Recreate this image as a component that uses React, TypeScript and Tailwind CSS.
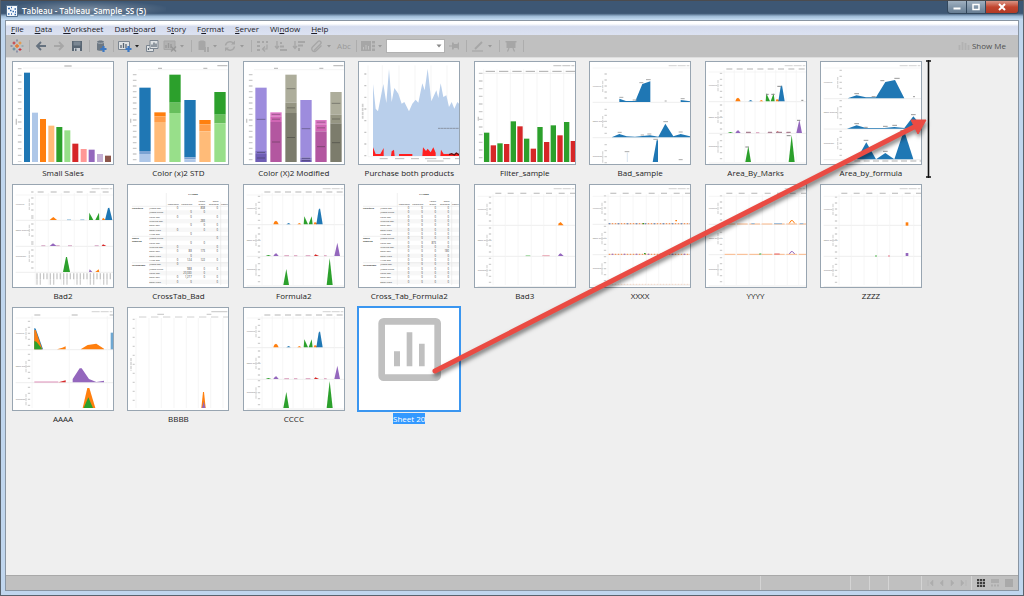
import { useState } from 'react';
import type { ReactNode } from 'react';

const BLUE = '#1f77b4';
const ORANGE = '#ff7f0e';
const GREEN = '#2ca02c';
const RED = '#d62728';
const PURPLE = '#9467bd';

// [x, width, top, bottom, color]
type Bar = [number, number, number, number, string];

const smallSales: Bar[] = [
  [33, 18, 32, 300, BLUE],
  [57, 18, 152, 300, '#aec7e8'],
  [81, 18, 171, 300, ORANGE],
  [106, 18, 191, 300, '#ffbb78'],
  [130, 18, 195, 300, GREEN],
  [154, 18, 205, 300, '#98df8a'],
  [178, 18, 245, 300, RED],
  [203, 18, 261, 300, '#ff9896'],
  [227, 18, 263, 300, PURPLE],
  [252, 18, 276, 300, '#c5b0d5'],
  [276, 18, 281, 300, '#8c564b'],
];

const stackTops = [
  [34, 77, 267, 276],
  [79, 151, 163, 180],
  [124, 38, 122, 153],
  [169, 114, 286, 292],
  [214, 174, 187, 208],
  [259, 90, 158, 184],
];

const stdColors = [
  [BLUE, '#7ba3d3', '#aec7e8'],
  [ORANGE, '#ff9e4a', '#ffbb78'],
  [GREEN, '#67bf5c', '#98df8a'],
];

const modifiedColors = [
  ['#9d8cdd', '#8172c4', '#6f5eb5'],
  ['#de78c6', '#d066b4', '#b357a0'],
  ['#adad9b', '#969683', '#7c7c6c'],
];

const filterBars: Bar[] = [212, 250, 244, 246, 178, 193, 230, 260, 195, 240, 190, 220, 180, 237].map(
  (top, i) => [27 + i * 20, 16, top, 300, i % 2 ? RED : GREEN] as Bar
);

const boxRows = ['Jumbo Box', 'Jumbo Drum', 'Large Box', 'Medium Box', 'Small Box', 'Small Pack', 'Wrap Bag'];
const crossRows = [
  ...boxRows,
  'Jumbo Drum',
  'Large Box',
  'Medium Box',
  'Small Box',
  'Small Pack',
  'Wrap Bag',
  'Jumbo Box',
  'Jumbo Drum',
  'Large Box',
  'Small Box',
  'Small Pack',
];

const badValues = [
  ['0', '', '808', '0'],
  ['', '0', '0', ''],
  ['0', '0', '', '0'],
  ['', '', '283', ''],
  ['', '0', '0', '0'],
  ['0', '', '0', '0'],
  ['', '0', '', ''],
  ['', '', '', '0'],
  ['', '0', '0', ''],
  ['0', '', '', '0'],
  ['0', '88', '173', '0'],
  ['', '0', '', ''],
  ['0', '124', '122', '0'],
  ['0', '', '', ''],
  ['', '988', '0', '0'],
  ['', '20,330', '0', ''],
  ['0', '1,277', '0', '0'],
  ['0', '0', '', '0'],
];

const formulaValues = crossRows.map((_, i) => ['0', '0', i === 8 ? '873' : '0', i === 10 ? '180' : '0']);

function Bars({ bars }: { bars: Bar[] }) {
  return (
    <>
      {bars.map(([x, w, top, bottom, fill], i) => (
        <rect key={i} x={x} y={top} width={w} height={bottom - top} fill={fill} />
      ))}
    </>
  );
}

// Faint tick labels down the left axis
function Ticks({ x = 20, from = 20, to = 300, step = 17 }: { x?: number; from?: number; to?: number; step?: number }) {
  return <path d={`M${x} ${from}V${to}`} stroke="#cccccc" strokeWidth={11} strokeDasharray={`4 ${step - 4}`} />;
}

function Area({ points, fill = BLUE }: { points: string; fill?: string }) {
  return <polygon points={points} fill={fill} />;
}

function Panes({ rows, left, cols, header = 24 }: { rows: number[]; left: number; cols: number[]; header?: number }) {
  const names = ['Furniture', 'Office Supplies', 'Technology'];
  return (
    <g>
      <path d={`M236 11H298`} stroke="#dadada" strokeWidth={4} strokeDasharray="24 3" />
      {rows.map((y, i) => (
        <g key={y}>
          <text x={8} y={y - 46} fontSize={6} fill="#777">
            {names[i]}
          </text>
          <path d={`M${left - 9} ${y - 86}V${y - 4}`} stroke="#d0d0d0" strokeWidth={7} strokeDasharray="4 14" />
          <path d={`M${left - 18} ${y - 64}V${y - 28}`} stroke="#dadada" strokeWidth={4} strokeDasharray="10 2" />
          <path d={`M8 ${y + 1}H300`} stroke="#e6e6e6" strokeWidth={2} />
        </g>
      ))}
      <path d={`M8 ${header + 6}H300`} stroke="#f0f0f0" strokeWidth={2} />
      {cols.map((x) => (
        <g key={x}>
          <path d={`M${x} ${header}V300`} stroke="#f2f2f2" strokeWidth={2} />
          <path d={`M${x + 7} ${header - 3}h18`} stroke="#c8c8c8" strokeWidth={4} />
        </g>
      ))}
    </g>
  );
}

const narrowCols = [54, 85, 116, 147, 178, 209, 240, 271];
const wideCols = [54, 91, 129, 169, 206, 244, 278];

function StackedBars({ colors, labels }: { colors: string[][]; labels?: boolean }) {
  return (
    <>
      <Ticks x={20} from={36} />
      <path d="M30 23H300" stroke="#eee" strokeWidth={2} />
      <path d="M90 19h12M226 19h12M268 11h30" stroke="#c0c0c0" strokeWidth={4} />
      <path d="M8 170v12" stroke="#c8c8c8" strokeWidth={4} />
      {stackTops.map(([x, a, b, c], i) => (
        <g key={x}>
          <Bars
            bars={[
              [x, 34, a, b, colors[i % 3][0]],
              [x, 34, b, c, colors[i % 3][1]],
              [x, 34, c, 300, colors[i % 3][2]],
            ]}
          />
          {labels && (
            <path
              d={`M${x + 4} ${(a + b) / 2}h26M${x + 5} ${(b + c) / 2}h24M${x + 5} ${(c + 300) / 2}h24`}
              stroke="#222"
              strokeOpacity={0.35}
              strokeWidth={3}
            />
          )}
        </g>
      ))}
    </>
  );
}

function FormulaChart() {
  return (
    <>
      <Panes rows={[118, 213, 302]} left={54} cols={narrowCols} />
      <Area fill={ORANGE} points="88,118 91,110 96,107 100,110 104,118" />
      <Area points="127,118 134,114 140,118" />
      <Area fill={ORANGE} points="160,118 166,114 172,118" />
      <Area fill={GREEN} points="179,118 181,94 192,118" />
      <Area fill={GREEN} points="194,118 203,94 206,118" />
      <Area fill={ORANGE} points="209,118 212,111 219,114 219,118" />
      <Area points="217,118 224,74 228,70 236,118" />
      <Area fill={GREEN} points="65,213 73,210 82,213" />
      <Area fill={PURPLE} points="88,213 93,206 97,205 104,213" />
      <path d="M121 212h14M150 212h10M185 212h14M240 212h8" stroke="#dba0bd" strokeWidth={3} />
      <Area fill={RED} points="210,213 214,208 225,213" />
      <Area fill={PURPLE} points="271,213 280,173 288,213" />
      <Area fill={GREEN} points="118,300 127,252 135,300" />
      <Area fill={GREEN} points="248,300 257,219 266,300" />
    </>
  );
}

function CrossTab({ values }: { values: string[][] }) {
  const xs = [151, 191, 231, 270];
  return (
    <g fontSize={7} fill="#333">
      {crossRows.map((_, i) => i % 2 === 1 && <rect key={i} x={64} y={63 + i * 13} width={236} height={13} fill="#f7f7f7" />)}
      <path d="M115 24V300M278 50V300M12 64H300M12 154H300M12 233H300" stroke="#e8e8e8" strokeWidth={2} fill="none" />
      <text x={195} y={31} textAnchor="middle" fontWeight={700}>
        1/1/2009
      </text>
      <text x={153} y={60} textAnchor="end">Consumer</text>
      <text x={193} y={60} textAnchor="end">Corporate</text>
      <text x={231} y={52} textAnchor="end">Home</text>
      <text x={231} y={60} textAnchor="end">Office</text>
      <text x={272} y={52} textAnchor="end">Small</text>
      <text x={272} y={60} textAnchor="end">Business</text>
      <text x={279} y={60}>Consu</text>
      <g fontWeight={700}>
        <text x={12} y={72}>Furniture</text>
        <text x={12} y={163}>Office</text>
        <text x={12} y={172}>Supplies</text>
        <text x={12} y={242}>Technology</text>
      </g>
      {crossRows.map((name, i) => (
        <g key={i}>
          <text x={64} y={72 + i * 13}>
            {name}
          </text>
          {values[i].map((v, c) => (
            <text key={c} x={xs[c]} y={72 + i * 13} textAnchor="end" fontSize={8}>
              {v}
            </text>
          ))}
        </g>
      ))}
    </g>
  );
}

const sheets: { name: string; chart: ReactNode }[] = [
  {
    name: 'Small Sales',
    chart: (
      <>
        <Ticks from={18} step={20} />
        <path d="M30 18H296" stroke="#eee" strokeWidth={2} />
        <path d="M154 12h22M10 170v18" stroke="#c4c4c4" strokeWidth={4} />
        <Bars bars={smallSales} />
      </>
    ),
  },
  { name: 'Color (x)2 STD', chart: <StackedBars colors={stdColors} /> },
  { name: 'Color (X)2 Modified', chart: <StackedBars colors={modifiedColors} labels /> },
  {
    name: 'Purchase both products',
    chart: (
      <>
        <path d="M27 10V284H300M70 10V284M120 10V284M168 10V284M216 10V284M264 10V284" stroke="#f0f0f0" strokeWidth={2} fill="none" />
        <path d="M19 34V284" stroke="#c4c4c4" strokeWidth={6} strokeDasharray="4 31" />
        <path d="M11 125V170" stroke="#d0d0d0" strokeWidth={5} strokeDasharray="10 2" />
        <Area
          fill="#b9cfeb"
          points="42,66 50,140 57,148 73,66 82,123 90,21 98,120 106,78 118,95 128,125 136,120 150,148 160,125 170,113 178,122 190,64 197,85 206,20 217,118 232,85 238,108 245,64 253,105 262,100 270,135 278,120 286,140 295,120 300,125 300,282 42,282"
        />
        <g fill="#ff2020">
          <polygon points="42,282 42,256 50,276 64,276 74,258 74,282" />
          <polygon points="96,282 98,268 105,263 107,282" />
          <rect x={120} y={276} width={40} height={6} />
          <polygon points="190,282 192,256 201,267 206,260 215,271 223,256 230,272 230,282" />
          <polygon points="244,282 246,263 254,276 300,275 300,282" />
        </g>
        <path d="M270 278l8-3 8 4 6-6 8 5" stroke="#601010" strokeWidth={4} fill="none" />
        <path d="M237 199h62" stroke="#8b95a4" strokeWidth={3} strokeDasharray="8 1" />
        <path d="M62 290h24M108 290h28M156 290h24M198 290h34M252 290h22M288 290h12M204 297h50" stroke="#bcbcbc" strokeWidth={3} />
      </>
    ),
  },
  {
    name: 'FIlter_sample',
    chart: (
      <>
        <path d="M26 22V300M66 22V300M106 22V300M146 22V300M186 22V300M226 22V300M266 22V300" stroke="#f0f0f0" strokeWidth={2} />
        <path d="M22 34H300" stroke="#e8e8e8" strokeWidth={2} />
        <path d="M32 28H300" stroke="#aaa" strokeWidth={3} strokeDasharray="28 12" />
        <path d="M235 11H298" stroke="#ccc" strokeWidth={4} strokeDasharray="24 3" />
        <path d="M10 164v12" stroke="#c8c8c8" strokeWidth={4} />
        <Ticks x={17} from={32} step={23} />
        <Bars bars={filterBars} />
      </>
    ),
  },
  {
    name: 'Bad_sample',
    chart: (
      <>
        <Panes rows={[120, 226, 332]} left={56} cols={[]} header={12} />
        <Area points="88,120 88,110 108,117 136,117 157,66 181,58 181,120" />
        <Area points="272,120 272,114 300,118 300,120" />
        <Area points="65,226 88,216 110,223 135,224 180,220 205,224 226,185 250,223 272,216 300,223 300,226" />
        <Area points="188,300 200,235 204,235 204,300" />
        <path d="M112 272V300" stroke="#c5d8e8" strokeWidth={2} />
        <path
          d="M148 62h12M168 53h14M88 106h12M128 114h12M224 117h6M272 110h12M83 211h12M220 179h14M172 216h12M152 219h10M266 210h12M190 232h14M104 269h14M266 293h12"
          stroke="#aaa"
          strokeWidth={3}
        />
      </>
    ),
  },
  {
    name: 'Area_By_Marks',
    chart: (
      <>
        <FormulaChart />
        <path d="M214 73h12M180 97h8M196 97h10M273 175h10M118 255h10M242 221h12M286 115h6" stroke="#888" strokeWidth={3} />
        <path d="M120 211h14M186 211h12M210 211h18M242 211h12" stroke="#a98292" strokeWidth={4} />
      </>
    ),
  },
  {
    name: 'Area_by_formula',
    chart: (
      <>
        <Panes rows={[109, 200, 292]} left={68} cols={[]} header={12} />
        <Area points="80,109 107,100 135,106 165,106 193,60 222,54 250,109" />
        <Area points="78,200 107,190 135,198 190,198 220,195 250,198 277,163 300,190 300,200" />
        <Area points="107,292 136,241 165,292" />
        <Area points="165,292 193,273 220,292" />
        <Area points="220,292 249,205 277,292" />
        <path
          d="M178 56h12M220 49h16M100 95h14M152 104h12M276 104h6M100 185h14M130 196h10M186 193h14M214 190h14M270 158h14M128 235h14M186 268h14M238 206h14"
          stroke="#999"
          strokeWidth={3}
        />
        <path d="M100 297H300" stroke="#b0b0b0" strokeWidth={3} strokeDasharray="18 10" />
      </>
    ),
  },
  {
    name: 'Bad2',
    chart: (
      <>
        <Panes rows={[105, 183, 261]} left={67} cols={[67, 106, 145, 184, 223, 262]} />
        <Area fill={ORANGE} points="110,105 117,99 121,96 132,105" />
        <path d="M162 104h12M202 104h12" stroke="#a9cbe3" strokeWidth={3} />
        <Area fill={GREEN} points="228,105 229,83 241,105" />
        <Area fill={GREEN} points="247,105 258,83 259,105" />
        <Area fill={ORANGE} points="267,105 270,98 278,105" />
        <Area points="276,105 285,69 289,68 298,105" />
        <path d="M85 182h12M130 182h10M165 182h12M245 182h12" stroke="#d7aac6" strokeWidth={3} />
        <Area fill={PURPLE} points="110,183 120,175 131,183" />
        <Area fill={RED} points="266,183 270,178 280,183" />
        <Area fill={GREEN} points="150,261 159,216 162,216 171,261" />
        <Area fill={PURPLE} points="228,261 230,253 238,261" />
        <Area fill={ORANGE} points="247,261 257,253 259,261" />
        <path d="M70 274H300" stroke="#c8c8c8" strokeWidth={18} strokeDasharray="4 6" />
        <path d="M70 291H300" stroke="#d0d0d0" strokeWidth={16} strokeDasharray="4 6 4 26" />
      </>
    ),
  },
  { name: 'CrossTab_Bad', chart: <CrossTab values={badValues} /> },
  { name: 'Formula2', chart: <FormulaChart /> },
  { name: 'Cross_Tab_Formula2', chart: <CrossTab values={formulaValues} /> },
  {
    name: 'Bad3',
    chart: (
      <>
        <Panes rows={[120, 213, 304]} left={54} cols={wideCols} header={28} />
        <Area fill={ORANGE} points="249,121 252,115 257,111 266,121" />
        <Area fill={PURPLE} points="249,213 253,207 257,205 266,213" />
        <path d="M152 212h14" stroke="#9fd69f" strokeWidth={3} />
        <path d="M202 212h22" stroke="#e9a6b4" strokeWidth={3} />
      </>
    ),
  },
  {
    name: 'XXXX',
    chart: (
      <>
        <Panes rows={[117, 208, 299]} left={54} cols={wideCols} header={28} />
        <g strokeWidth={4} fill="none">
          <path d="M56 116H300M56 208H300" stroke="#ef9a65" strokeDasharray="5 4" />
          <path d="M56 116H300" stroke="#6f96c8" strokeDasharray="5 22" />
          <path d="M65 208H300" stroke="#a378c4" strokeDasharray="5 31" />
          <path d="M158 116h4M162 206h5" stroke={GREEN} />
          <path d="M56 298H300" stroke="#f0c8b0" strokeWidth={2} strokeDasharray="5 4" />
          <path d="M256 107h5" stroke={ORANGE} />
        </g>
      </>
    ),
  },
  {
    name: 'YYYY',
    chart: (
      <>
        <Panes rows={[117, 208, 302]} left={54} cols={wideCols} header={28} />
        <g strokeWidth={3} fill="none">
          <path d="M56 117H300M56 208H300" stroke="#fbb98a" strokeDasharray="32 5" />
          <path d="M136 116h10M204 116h24M282 116h10" stroke="#8fb9dd" />
          <path d="M250 115l5-8h5l6 8" stroke={ORANGE} />
          <path d="M250 207l5-7h5l6 7" stroke={PURPLE} />
          <path d="M160 207h6" stroke={GREEN} />
          <path d="M205 207h16" stroke="#e46a78" />
        </g>
      </>
    ),
  },
  {
    name: 'ZZZZ',
    chart: (
      <>
        <Panes rows={[120, 213, 304]} left={54} cols={wideCols} header={28} />
        <rect x={254} y={112} width={8} height={10} fill={ORANGE} />
        <rect x={254} y={204} width={8} height={9} fill={PURPLE} />
        <rect x={162} y={211} width={6} height={4} fill="#7cc87c" />
        <rect x={201} y={211} width={6} height={4} fill="#ea9aa8" />
      </>
    ),
  },
  {
    name: 'AAAA',
    chart: (
      <>
        <Panes rows={[124, 223, 322]} left={57} cols={[57, 169, 283]} header={24} />
        <Area points="64,124 64,60 68,62 90,124" />
        <Area fill={ORANGE} points="64,124 64,66 68,66 88,124" />
        <Area fill={GREEN} points="64,124 64,99 70,101 86,121 86,124" />
        <Area fill={ORANGE} points="132,124 148,119 158,115 158,124" />
        <Area fill={ORANGE} points="203,124 224,111 250,107 273,122 273,124" />
        <rect x={293} y={74} width={7} height={50} fill="#6fa8d2" />
        <path d="M64 222h72" stroke="#dd8fb8" strokeWidth={3} />
        <Area fill={RED} points="136,223 158,217 158,223" />
        <Area fill={PURPLE} points="179,223 179,213 200,181 206,181 228,213 250,222 273,218 273,223" />
        <Area fill={ORANGE} points="209,300 223,240 229,240 247,300" />
        <Area fill={GREEN} points="212,300 226,268 240,300" />
      </>
    ),
  },
  {
    name: 'BBBB',
    chart: (
      <>
        <path d="M24 30V300M63 30V300M100 30V300M138 30V300M175 30V300M211 30V300M248 30V300M285 30V300" stroke="#f0f0f0" strokeWidth={2} />
        <path d="M33 27H300" stroke="#d0d0d0" strokeWidth={3} strokeDasharray="22 14" />
        <path d="M88 19h20M236 19h14M250 11h48" stroke="#d0d0d0" strokeWidth={4} />
        <path d="M17 32V290" stroke="#d0d0d0" strokeWidth={6} strokeDasharray="4 23" />
        <path d="M9 150v38" stroke="#d0d0d0" strokeWidth={4} strokeDasharray="10 2" />
        <Area fill={ORANGE} points="220,300 225,252 228,252 233,300" />
        <Area fill={PURPLE} points="222,300 227,280 232,300" />
      </>
    ),
  },
  { name: 'CCCC', chart: <FormulaChart /> },
  {
    name: 'Sheet 20',
    chart: (
      <>
        <rect x={68} y={40} width={168} height={169} rx={6} fill="none" stroke="#c0c0c0" strokeWidth={20} />
        <path d="M105 130h18v45h-18zM143 73h17v102h-17zM180 107h17v68h-17z" fill="#c0c0c0" />
      </>
    ),
  },
];

function SheetThumb({ name, chart, selected, marker, onSelect }: {
  name: string;
  chart: ReactNode;
  selected: boolean;
  marker: boolean;
  onSelect: () => void;
}) {
  return (
    <button type="button" onClick={onSelect} className="relative block w-[102px] text-center">
      <span
        className={`block h-[104px] border bg-white ${
          selected ? 'border-[#3a96f0] ring-1 ring-[#3a96f0]' : 'border-[#98a5b1]'
        }`}
      >
        <svg viewBox="0 0 300 306" className="block h-full w-full" aria-hidden="true">
          {chart}
        </svg>
      </span>
      <span className="block h-[17px] text-[8px] leading-4 whitespace-nowrap">
        <span className={selected ? 'bg-[#3399ff] text-white' : 'text-[#222]'}>{name}</span>
      </span>
      {marker && (
        <svg viewBox="0 0 5 118" className="absolute -top-px -right-[9px] h-[118px] w-[5px]" aria-hidden="true">
          <path d="M0 1h5M0 117h5M2.5 0v118" stroke="#111" strokeWidth={1.6} />
        </svg>
      )}
    </button>
  );
}

// menu label with the index of its underlined access key
const menus: [string, number][] = [
  ['File', 0],
  ['Data', 0],
  ['Worksheet', 0],
  ['Dashboard', 4],
  ['Story', 1],
  ['Format', 1],
  ['Server', 0],
  ['Window', 2],
  ['Help', 0],
];

function MenuBar() {
  return (
    <nav className="flex h-[14px] items-center gap-[11px] bg-gradient-to-b from-white from-20% via-[#d5dcee] via-40% to-[#dce2f2] px-[5px] pt-px text-[8px] leading-3 text-[#1c1c28]">
      {menus.map(([label, key]) => (
        <button key={label} type="button">
          {label.slice(0, key)}
          <u>{label[key]}</u>
          {label.slice(key + 1)}
        </button>
      ))}
    </nav>
  );
}

function Sep() {
  return (
    <span className="flex w-[6px] shrink-0 justify-center">
      <span className="h-3 w-px bg-[#adadad]" />
    </span>
  );
}

function Tool({ label, children }: { label: string; children: ReactNode }) {
  return (
    <button type="button" aria-label={label} className="flex w-[18px] shrink-0 items-center justify-center">
      <svg viewBox="0 0 14 14" className="h-[14px] w-[14px]" fill="none">
        {children}
      </svg>
    </button>
  );
}

function Caret({ color = '#999' }: { color?: string }) {
  return (
    <span className="w-[9px] shrink-0">
      <svg viewBox="0 0 6 6" className="h-[6px] w-[6px]">
        <path d="M1 2h4L3 4.5z" fill={color} />
      </svg>
    </span>
  );
}

const OFF = '#a6a6a6';

function ToolBar() {
  return (
    <div className="flex h-[22px] items-center bg-[#c0c0c0] pr-3 pl-[2px]">
      <Tool label="Start page">
        <path d="M5 7h4M7 5v4" stroke="#e8762c" strokeWidth={1.3} />
        <path d="M2.5 4h3M4 2.5v3M8.5 10.5h3M10 9v3" stroke="#c7303c" />
        <path d="M8.5 4h3M10 2.5v3" stroke="#eb912c" />
        <path d="M2.5 10h3M4 8.5v3" stroke="#59879b" />
        <path d="M.5 7h2M7 .5v2M7 11.5v2" stroke="#5b6591" />
        <path d="M11.5 7h2" stroke="#7099a6" />
      </Tool>
      <Sep />
      <Tool label="Undo">
        <path d="M12 7H3M7 3L3 7l4 4" stroke="#66727f" strokeWidth={1.8} />
      </Tool>
      <Tool label="Redo">
        <path d="M2 7h9M7 3l4 4-4 4" stroke={OFF} strokeWidth={1.8} />
      </Tool>
      <Tool label="Save">
        <path d="M2 2h10v10H2z" fill="#596673" />
        <path d="M3.5 2.5h7v4h-7z" fill="#7b8793" />
        <path d="M4 9h6v3H4z" fill="#c8cdd2" />
        <path d="M5 9.5h1.5V12H5z" fill="#596673" />
      </Tool>
      <Sep />
      <Tool label="New data source">
        <path d="M3 3c0-2 7-2 7 0v8c0 1-7 1-7 0z" fill="#6d7883" />
        <path d="M3 3.5c1 1 6 1 7 0" stroke="#aab1b8" />
        <path d="M9.5 7v6M6.5 10h6" stroke="#3c78c3" strokeWidth={2.2} />
      </Tool>
      <Sep />
      <Tool label="New worksheet">
        <path d="M.5 2.5h11v8H.5z" fill="#dfe2e4" stroke="#7b8590" />
        <path d="M3 9V6M5.5 9V4M8 9V5" stroke="#596673" strokeWidth={1.3} />
        <path d="M10.500 7v6M7.500 10h6" stroke="#3c78c3" strokeWidth={2.2} />
      </Tool>
      <Caret color="#222" />
      <Tool label="Duplicate sheet">
        <path d="M1.5 6.5h7v6h-7z" fill="#dfe2e4" stroke="#7b8590" />
        <path d="M5 1.5h8v8H5z" fill="#dfe2e4" stroke="#7b8590" />
        <path d="M7 8V5.5M9 8V3.5M11 8V4.5M3.5 11V9" stroke="#596673" strokeWidth={1.2} />
      </Tool>
      <Tool label="Clear sheet">
        <path d="M1 2h11v8.5H1z" fill="#b2b2b2" stroke={OFF} />
        <path d="M3 9V6M5.5 9V4M8 9V5" stroke="#999" strokeWidth={1.3} />
        <path d="M8 7.5l5 5M13 7.5l-5 5" stroke="#999" strokeWidth={1.5} />
      </Tool>
      <Caret />
      <Sep />
      <Tool label="Pause updates">
        <path d="M2.5 3c0-2 7-2 7 0v8h-7z" fill={OFF} />
        <path d="M9 8v5M12 8v5" stroke={OFF} strokeWidth={1.8} />
      </Tool>
      <Caret />
      <Tool label="Refresh">
        <path d="M2.5 6.5a4.5 4.5 0 0 1 8-2M11.5 7.5a4.5 4.5 0 0 1-8 2" stroke={OFF} strokeWidth={1.5} />
        <path d="M12 1.5v4H8zM2 12.5v-4h4z" fill={OFF} />
      </Tool>
      <Caret />
      <Sep />
      <Tool label="Swap rows and columns">
        <path d="M1 2h3v2H1zM1 6h3v2H1zM1 10h3v2H1zM6 2h2v2H6zM10 2h2v2h-2z" fill={OFF} />
        <path d="M11 5.5V10H7M9 7.5L6.5 10 9 12.5" stroke={OFF} strokeWidth={1.2} />
      </Tool>
      <Tool label="Sort ascending">
        <path d="M3 2v7M1 7l2 2.5L5 7" stroke={OFF} strokeWidth={1.3} />
        <path d="M6 3h2v2H6zM6 6.5h4v2H6zM6 10h7v2H6z" fill={OFF} />
      </Tool>
      <Tool label="Sort descending">
        <path d="M3 2v7M1 7l2 2.5L5 7" stroke={OFF} strokeWidth={1.3} />
        <path d="M6 2h7v2H6zM6 5.500h5v2H6zM6 9h2v3H6z" fill={OFF} />
      </Tool>
      <Tool label="Group members">
        <path d="M4 11.5l6.500-6.500a1.700 1.700 0 0 0-2.500-2.500L2.500 8a2.600 2.600 0 0 0 3.700 3.700L11.500 6.500" stroke={OFF} strokeWidth={1.3} />
      </Tool>
      <Caret />
      <button type="button" className="w-[18px] shrink-0 text-center text-[8px] leading-3 text-[#9a9a9a]">
        Abc
      </button>
      <Sep />
      <Tool label="View cards">
        <path d="M0 2h10v10H0zM11 2h3v2.500h-3zM11 5.700h3v2.500h-3zM11 9.500h3V12h-3z" fill={OFF} />
        <path d="M2.500 10.500V8M5 10.500V6M7.500 10.500V7" stroke="#c0c0c0" />
      </Tool>
      <Caret />
      <span className="relative shrink-0">
        <select aria-label="Fit" className="block h-[14px] w-[59px] appearance-none border border-[#b2b2b2] bg-white text-[8px]">
          <option></option>
        </select>
        <svg viewBox="0 0 6 6" className="pointer-events-none absolute top-1 right-[3px] h-[6px] w-[6px]">
          <path d="M.5 1.500h5L3 4.500z" fill="#888" />
        </svg>
      </span>
      <Tool label="Fix axes">
        <path d="M2 7h4" stroke={OFF} strokeWidth={1.2} />
        <path d="M5 3.500h1.500L7 5h3.500l.5-1.500h1v7h-1L10.500 9H7l-.5 1.500H5z" fill={OFF} />
      </Tool>
      <Sep />
      <Tool label="Highlight">
        <path d="M4 10l7-7" stroke={OFF} strokeWidth={2} />
        <path d="M1 12h11" stroke={OFF} strokeWidth={1.2} />
      </Tool>
      <Caret />
      <Sep />
      <Tool label="Presentation mode">
        <path d="M1.500 2h11v1.500h-1V9h-9V3.500h-1z" fill={OFF} />
        <path d="M5 9l-1.500 3.500M9 9l1.500 3.500" stroke={OFF} strokeWidth={1.2} />
      </Tool>
      <Sep />
      <button type="button" className="ml-auto flex shrink-0 items-center gap-[2px] text-[8px] leading-3 text-[#505050]">
        <svg viewBox="0 0 12 10" className="h-[10px] w-3" aria-hidden="true">
          <path d="M1.500 9V4M4.500 9V1M7.500 9V2M10.500 9V4" stroke="#b2b2b2" strokeWidth={1.8} />
        </svg>
        Show Me
      </button>
    </div>
  );
}

function TitleBar() {
  return (
    <header className="flex h-5 items-start justify-between border-t border-[#4b4b4d] bg-gradient-to-b from-[#3d5774] from-65% via-[#9dbad6] via-80% to-[#c8e0f6] pr-1 pl-[5px]">
      <div className="flex items-center gap-1 bg-radial from-white/30 to-transparent to-75% pr-5">
        <svg viewBox="0 0 12 12" className="mt-1 h-3 w-3" aria-hidden="true">
          <path d="M.5.5h11v11H.5z" fill="#f4f8fc" stroke="#53718f" />
          <path d="M2 3.500h2M5 2.500h1M8.500 4h1.500M4 5.500h1.500M6.500 6.500h1.500M2 9h1.500M5 9h1M8.500 9.500h1.500M9 7h1" stroke="#2f68ae" strokeWidth={1.4} />
        </svg>
        <h1 className="mt-[3px] text-[8px] leading-3 font-semibold whitespace-nowrap text-white">Tableau - Tableau_Sample_SS (5)</h1>
      </div>
      <div className="flex h-[13px] overflow-hidden rounded-b-sm border border-t-0 border-[#32475c] text-white">
        <button type="button" aria-label="Minimize" className="flex w-[19px] items-center justify-center border-r border-[#32475c] bg-gradient-to-b from-[#9fb0c0] to-[#667d93]">
          <svg viewBox="0 0 10 8" className="h-2 w-[10px]">
            <path d="M1.500 4.500h7v2h-7z" fill="#fff" />
          </svg>
        </button>
        <button type="button" aria-label="Maximize" className="flex w-[19px] items-center justify-center border-r border-[#32475c] bg-gradient-to-b from-[#9fb0c0] to-[#667d93]">
          <svg viewBox="0 0 10 8" className="h-2 w-[10px]">
            <path d="M2 1.500h6v5H2z" fill="none" stroke="#fff" strokeWidth={1.5} />
          </svg>
        </button>
        <button type="button" aria-label="Close" className="flex w-8 items-center justify-center bg-gradient-to-b from-[#d99384] via-[#c1452f] to-[#b23a25]">
          <svg viewBox="0 0 10 8" className="h-2 w-[10px]">
            <path d="M2 1l6 6M8 1L2 7" stroke="#fff" strokeWidth={2} />
          </svg>
        </button>
      </div>
    </header>
  );
}

function StatusBar() {
  const nav: [string, string][] = [
    ['First sheet', 'M2 1v6M7 1v6L4 4z'],
    ['Previous sheet', 'M6 1v6L3 4z'],
    ['Next sheet', 'M3 1v6l3-3z'],
    ['Last sheet', 'M7 1v6M2 1v6l3-3z'],
  ];
  return (
    <footer className="flex h-[15px] shrink-0 justify-end border-t border-[#a9a9a9] bg-[#c0c0c0]">
      <span className="w-[90px] border-l border-[#d4d4d4]" />
      <span className="w-[19px] border-l border-[#d4d4d4]" />
      <span className="w-[19px] border-l border-[#d4d4d4]" />
      <span className="w-[33px] border-l border-[#d4d4d4]" />
      <div className="flex w-[50px] items-center gap-[3px] border-l border-[#d4d4d4] pl-1">
        {nav.map(([label, d]) => (
          <button key={label} type="button" aria-label={label}>
            <svg viewBox="0 0 8 8" className="block h-2 w-2">
              <path d={d} fill="#adadad" stroke="#adadad" strokeWidth={0.5} />
            </svg>
          </button>
        ))}
      </div>
      <div className="flex w-[47px] items-center gap-[6px] border-l border-[#d4d4d4] pl-[5px]">
        <button type="button" aria-label="Show sheet sorter">
          <svg viewBox="0 0 8 8" className="block h-2 w-2">
            <path d="M0 1.200h8M0 4h8M0 6.800h8" stroke="#3d3d3d" strokeWidth={2.2} strokeDasharray="2.2 .7" />
          </svg>
        </button>
        <button type="button" aria-label="Show filmstrip">
          <svg viewBox="0 0 8 8" className="block h-2 w-2">
            <path d="M0 0h8v4H0zM0 5.500h2v2H0zM3 5.500h2v2H3zM6 5.500h2v2H6z" fill="#adadad" />
          </svg>
        </button>
        <button type="button" aria-label="Show tabs">
          <svg viewBox="0 0 8 8" className="block h-2 w-2">
            <path d="M0 0h8v8H0z" fill="#a9a9a9" />
          </svg>
        </button>
      </div>
    </footer>
  );
}

export default function App() {
  const [selected, setSelected] = useState('Sheet 20');

  return (
    <div className="flex min-h-screen flex-col border-x border-b border-[#59636d] bg-[#c0d6ee] font-['Open_Sans',sans-serif]">
      <TitleBar />
      <div className="mx-1 mb-1 flex flex-1 flex-col border border-[#8995a2]">
        <MenuBar />
        <ToolBar />
        <main className="relative flex-1 border-t border-[#dedede] bg-[#efefef] pt-[3px] pr-24 pl-[6px]">
          <div className="grid grid-cols-[repeat(auto-fill,102px)] justify-between gap-x-3 gap-y-[2px]">
            {sheets.map((sheet) => (
              <SheetThumb
                key={sheet.name}
                name={sheet.name}
                chart={sheet.chart}
                selected={sheet.name === selected}
                marker={sheet.name === 'Area_by_formula'}
                onSelect={() => setSelected(sheet.name)}
              />
            ))}
          </div>

          {/* Drag arrow from the new sheet to its drop position */}
          <svg
            viewBox="0 0 510 270"
            className="pointer-events-none absolute top-[54px] left-[422px] h-[270px] w-[510px] drop-shadow-[1px_3px_2px_rgba(0,0,0,0.5)]"
            aria-hidden="true"
          >
            <path d="M7 259L488 14" stroke="#ea4b43" strokeWidth={5} strokeLinecap="round" />
            <path d="M498 8L483 8L490 22z" fill="#ea4b43" stroke="#ea4b43" strokeWidth={1} />
          </svg>
        </main>
        <StatusBar />
      </div>
    </div>
  );
}
